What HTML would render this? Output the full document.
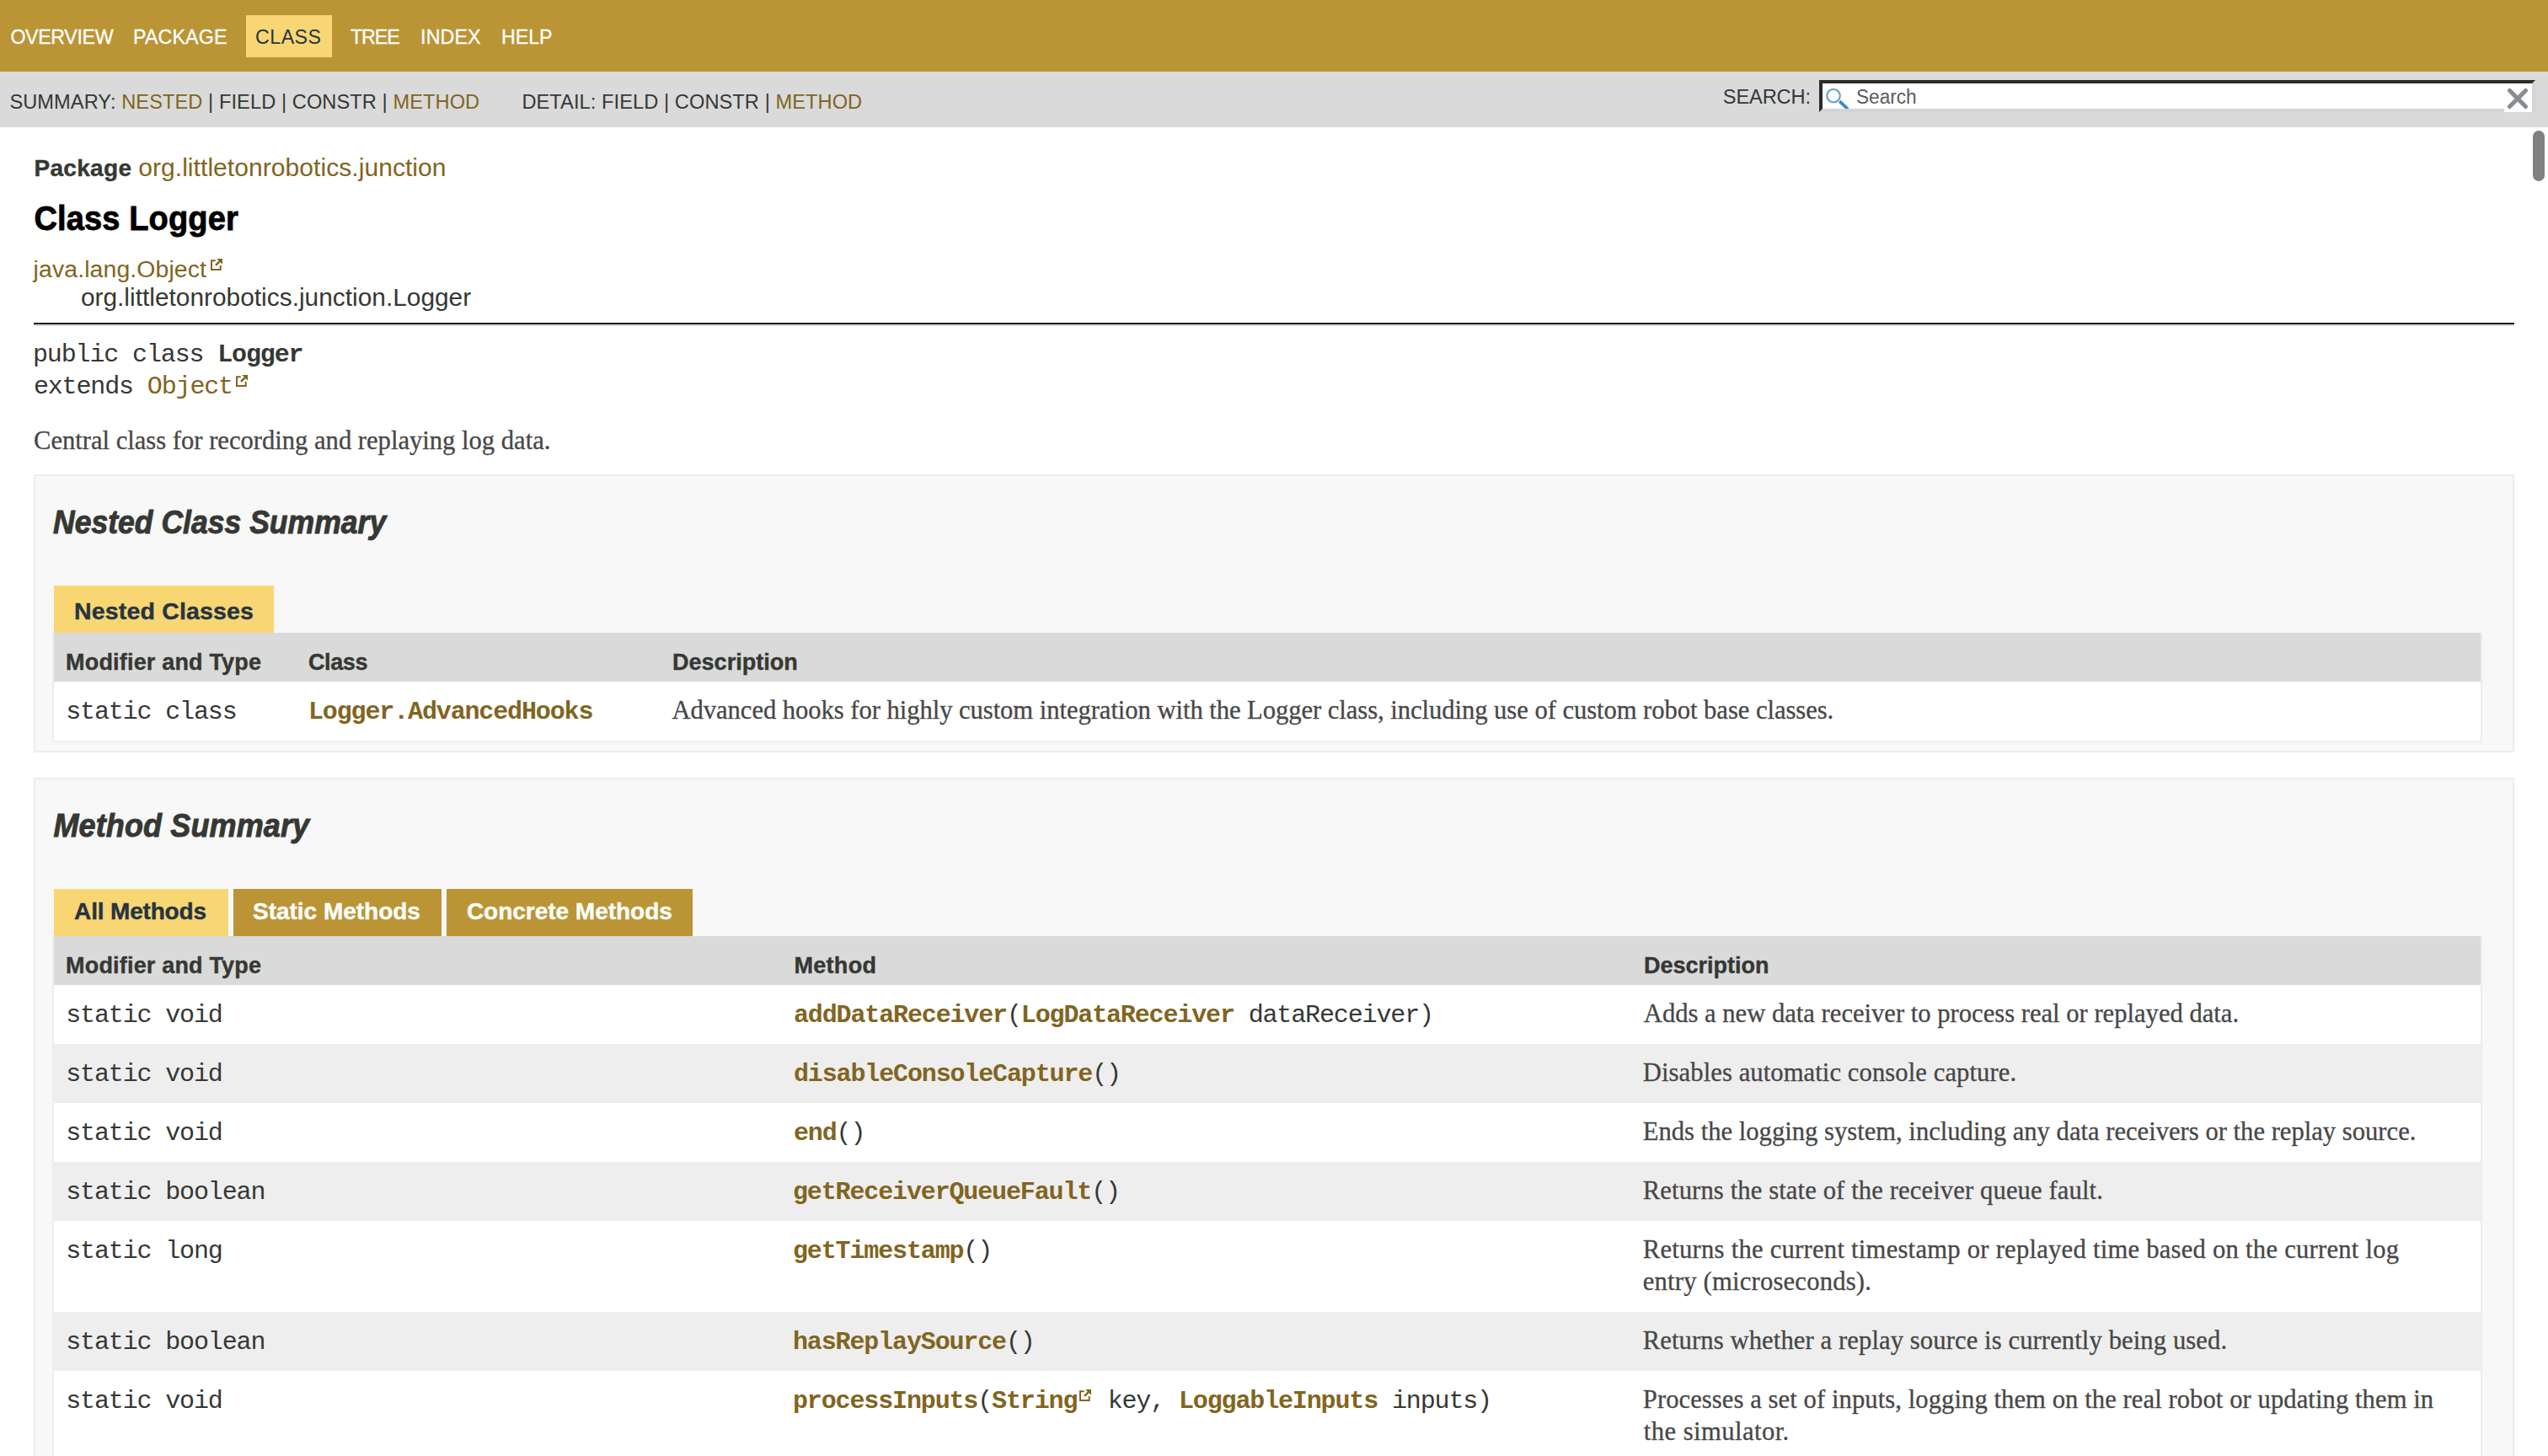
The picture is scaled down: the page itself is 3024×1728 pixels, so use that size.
<!DOCTYPE html><html><head><meta charset="utf-8"><style>
html,body{margin:0;padding:0;width:3024px;height:1728px;overflow:hidden;background:#fff}
.b{position:absolute}
@media (max-width:2000px){html{zoom:0.5}}
.t{position:absolute;white-space:nowrap;-webkit-text-stroke:0px currentColor}
.f-LiberationSerif{-webkit-text-stroke-width:0.3px}
.f-LiberationSans.w700{-webkit-text-stroke-width:0.4px}
.f-LiberationSans b{-webkit-text-stroke-width:0.4px}
</style></head><body><div class="b" style="left:0px;top:0px;width:3024px;height:85px;background:#bb9535"></div><div class="b" style="left:292px;top:18px;width:102px;height:50px;background:#f8d673"></div><div class="b" style="left:0px;top:85px;width:3024px;height:66px;background:#dadada"></div><div class="b" style="left:2159px;top:95px;width:850px;height:38px;background:#fff;border-style:solid;border-width:4px;border-color:#2b2b2b #d4d4d4 #d4d4d4 #2b2b2b;box-sizing:border-box"></div><div class="b" style="left:2163px;top:99px;width:842px;height:30px;overflow:hidden"><svg width="842" height="30" style="display:block"><circle cx="13" cy="14.6" r="7.8" fill="none" stroke="#72a6cb" stroke-width="2.3"/><path d="M20.2 21.2L30 30.5" stroke="#4588c2" stroke-width="3.8" fill="none"/></svg></div><div class="b" style="left:2972px;top:99px;width:33px;height:34px;background:#fff"><svg width="33" height="34" style="display:block"><path d="M6.5 8.5L25.5 27.5M25.5 8.5L6.5 27.5" stroke="#898d91" stroke-width="5.2" stroke-linecap="round"/></svg></div><div class="b" style="left:3006px;top:155px;width:14px;height:60px;background:#808080;border-radius:7px"></div><div class="b" style="left:250px;top:307px;width:14px;height:14px;"><svg width="14" height="14" viewBox="0 0 14 14" style="display:block"><path d="M0 1.2H5.7V3.2H2V12H10.7V8.1H12.7V14H0Z" fill="#816521"/><path d="M7.2 0H14V6.8Z" fill="#816521"/><path d="M5.1 7.0L10.6 1.5L12.4 3.3L6.9 8.8Z" fill="#816521"/></svg></div><div class="b" style="left:40px;top:383px;width:2944px;height:4px;border-top:2px solid #1c1c1c;border-bottom:2px solid #d9d9d9;box-sizing:border-box"></div><div class="b" style="left:280px;top:445px;width:14px;height:14px;"><svg width="14" height="14" viewBox="0 0 14 14" style="display:block"><path d="M0 1.2H5.7V3.2H2V12H10.7V8.1H12.7V14H0Z" fill="#816521"/><path d="M7.2 0H14V6.8Z" fill="#816521"/><path d="M5.1 7.0L10.6 1.5L12.4 3.3L6.9 8.8Z" fill="#816521"/></svg></div><div class="b" style="left:40px;top:563px;width:2944px;height:330px;background:#f8f8f8;border:2px solid #ededed;box-sizing:border-box"></div><div class="b" style="left:64px;top:695px;width:261px;height:56px;background:#f8d673"></div><div class="b" style="left:62px;top:751px;width:2884px;height:130px;background:#fff;border:2px solid #ededed;border-top:0;box-sizing:border-box"></div><div class="b" style="left:64px;top:751px;width:2880px;height:58px;background:#dadada"></div><div class="b" style="left:40px;top:923px;width:2944px;height:877px;background:#f8f8f8;border:2px solid #ededed;box-sizing:border-box"></div><div class="b" style="left:64px;top:1055px;width:207px;height:56px;background:#f8d673"></div><div class="b" style="left:277px;top:1055px;width:247px;height:56px;background:#bb9535"></div><div class="b" style="left:530px;top:1055px;width:292px;height:56px;background:#bb9535"></div><div class="b" style="left:62px;top:1111px;width:2884px;height:689px;background:#fff;border:2px solid #ededed;border-top:0;box-sizing:border-box"></div><div class="b" style="left:64px;top:1111px;width:2880px;height:58px;background:#dadada"></div><div class="b" style="left:64px;top:1239px;width:2880px;height:70px;background:#eeeeee"></div><div class="b" style="left:64px;top:1379px;width:2880px;height:70px;background:#eeeeee"></div><div class="b" style="left:64px;top:1557px;width:2880px;height:70px;background:#eeeeee"></div><div class="t f-LiberationSans w400" id="t0" style="left:12.40px;top:28.00px;font-family:'Liberation Sans';font-weight:400;font-style:normal;font-size:23.2px;line-height:32px;color:#ffffff;letter-spacing:-0.329px;transform:scaleY(1.045);transform-origin:0 24.00px;-webkit-text-stroke-width:0.3px;">OVERVIEW</div><div class="t f-LiberationSans w400" id="t1" style="left:158.00px;top:28.00px;font-family:'Liberation Sans';font-weight:400;font-style:normal;font-size:23.2px;line-height:32px;color:#ffffff;letter-spacing:0.167px;transform:scaleY(1.045);transform-origin:0 24.00px;-webkit-text-stroke-width:0.3px;">PACKAGE</div><div class="t f-LiberationSans w400" id="t2" style="left:415.90px;top:28.00px;font-family:'Liberation Sans';font-weight:400;font-style:normal;font-size:23.2px;line-height:32px;color:#ffffff;letter-spacing:-1.033px;transform:scaleY(1.045);transform-origin:0 24.00px;-webkit-text-stroke-width:0.3px;">TREE</div><div class="t f-LiberationSans w400" id="t3" style="left:499.10px;top:28.00px;font-family:'Liberation Sans';font-weight:400;font-style:normal;font-size:23.2px;line-height:32px;color:#ffffff;letter-spacing:0.125px;transform:scaleY(1.045);transform-origin:0 24.00px;-webkit-text-stroke-width:0.3px;">INDEX</div><div class="t f-LiberationSans w400" id="t4" style="left:595.00px;top:28.00px;font-family:'Liberation Sans';font-weight:400;font-style:normal;font-size:23.2px;line-height:32px;color:#ffffff;transform:scaleY(1.045);transform-origin:0 24.00px;-webkit-text-stroke-width:0.3px;">HELP</div><div class="t f-LiberationSans w400" id="t5" style="left:303.00px;top:28.00px;font-family:'Liberation Sans';font-weight:400;font-style:normal;font-size:23.2px;line-height:32px;color:#253441;letter-spacing:0.500px;transform:scaleY(1.045);transform-origin:0 24.00px;">CLASS</div><div class="t f-LiberationSans w400" id="t6" style="left:11.40px;top:105.00px;font-family:'Liberation Sans';font-weight:400;font-style:normal;font-size:23.6px;line-height:33px;color:#353833;letter-spacing:0.090px;transform:scaleY(1.045);transform-origin:0 24.00px;">SUMMARY:&nbsp;<span style="color:#816521">NESTED</span> | FIELD | CONSTR | <span style="color:#816521">METHOD</span></div><div class="t f-LiberationSans w400" id="t7" style="left:619.40px;top:105.00px;font-family:'Liberation Sans';font-weight:400;font-style:normal;font-size:23.6px;line-height:33px;color:#353833;letter-spacing:0.087px;transform:scaleY(1.045);transform-origin:0 24.00px;">DETAIL:&nbsp;FIELD | CONSTR | <span style="color:#816521">METHOD</span></div><div class="t f-LiberationSans w400" id="t8" style="left:2044.80px;top:99.00px;font-family:'Liberation Sans';font-weight:400;font-style:normal;font-size:23.6px;line-height:33px;color:#353833;letter-spacing:-0.117px;transform:scaleY(1.045);transform-origin:0 24.00px;">SEARCH:</div><div class="t f-LiberationSans w400" id="t9" style="left:2203.00px;top:100.00px;font-family:'Liberation Sans';font-weight:400;font-style:normal;font-size:22.6px;line-height:32px;color:#5c5c5c;transform:scaleY(1.045);transform-origin:0 23.00px;">Search</div><div class="t f-LiberationSans w700" id="t10" style="left:40.40px;top:180.00px;font-family:'Liberation Sans';font-weight:700;font-style:normal;font-size:28px;line-height:39px;color:#353833;letter-spacing:0.333px;">Package</div><div class="t f-LiberationSans w400" id="t11" style="left:164.20px;top:178.00px;font-family:'Liberation Sans';font-weight:400;font-style:normal;font-size:30px;line-height:42px;color:#816521;letter-spacing:0.062px;">org.littletonrobotics.junction</div><div class="t f-LiberationSans w700" id="t12" style="left:40.40px;top:234.00px;font-family:'Liberation Sans';font-weight:700;font-style:normal;font-size:38px;line-height:53px;color:#000000;letter-spacing:0.145px;transform:scaleY(1.065);transform-origin:0 39.00px;-webkit-text-stroke-width:0.8px;">Class Logger</div><div class="t f-LiberationSans w400" id="t13" style="left:39.60px;top:299.00px;font-family:'Liberation Sans';font-weight:400;font-style:normal;font-size:28.4px;line-height:40px;color:#816521;letter-spacing:0.120px;">java.lang.Object</div><div class="t f-LiberationSans w400" id="t14" style="left:95.90px;top:332.00px;font-family:'Liberation Sans';font-weight:400;font-style:normal;font-size:29.8px;line-height:42px;color:#353833;letter-spacing:0.031px;">org.littletonrobotics.junction.Logger</div><div class="t f-LiberationMono w400" id="t15" style="left:39.00px;top:400.00px;font-family:'Liberation Mono';font-weight:400;font-style:normal;font-size:30px;line-height:42px;color:#353833;letter-spacing:-1.140px;">public class <b>Logger</b></div><div class="t f-LiberationMono w400" id="t16" style="left:39.90px;top:438.00px;font-family:'Liberation Mono';font-weight:400;font-style:normal;font-size:30px;line-height:42px;color:#353833;letter-spacing:-1.140px;">extends <span style="color:#816521">Object</span></div><div class="t f-LiberationSerif w400" id="t17" style="left:40.00px;top:502.00px;font-family:'Liberation Serif';font-weight:400;font-style:normal;font-size:30.6px;line-height:43px;color:#474747;">Central class for recording and replaying log data.</div><div class="t f-LiberationSans w700" id="t18" style="left:63.00px;top:596.00px;font-family:'Liberation Sans';font-weight:700;font-style:italic;font-size:35.5px;line-height:50px;color:#353833;letter-spacing:0.026px;transform:scaleY(1.07);transform-origin:0 37.00px;-webkit-text-stroke-width:0.9px;">Nested Class Summary</div><div class="t f-LiberationSans w700" id="t19" style="left:88.10px;top:705.00px;font-family:'Liberation Sans';font-weight:700;font-style:normal;font-size:28.5px;line-height:40px;color:#253441;letter-spacing:0.162px;">Nested Classes</div><div class="t f-LiberationSans w700" id="t20" style="left:78.10px;top:767.00px;font-family:'Liberation Sans';font-weight:700;font-style:normal;font-size:27px;line-height:38px;color:#353833;letter-spacing:0.181px;">Modifier and Type</div><div class="t f-LiberationSans w700" id="t21" style="left:366.00px;top:767.00px;font-family:'Liberation Sans';font-weight:700;font-style:normal;font-size:27px;line-height:38px;color:#353833;letter-spacing:-0.400px;">Class</div><div class="t f-LiberationSans w700" id="t22" style="left:798.00px;top:767.00px;font-family:'Liberation Sans';font-weight:700;font-style:normal;font-size:27px;line-height:38px;color:#353833;letter-spacing:0.020px;">Description</div><div class="t f-LiberationMono w400" id="t23" style="left:78.20px;top:824.00px;font-family:'Liberation Mono';font-weight:400;font-style:normal;font-size:30px;line-height:42px;color:#353833;letter-spacing:-1.140px;">static class</div><div class="t f-LiberationMono w700" id="t24" style="left:366.00px;top:824.00px;font-family:'Liberation Mono';font-weight:700;font-style:normal;font-size:30px;line-height:42px;color:#816521;letter-spacing:-1.140px;">Logger.AdvancedHooks</div><div class="t f-LiberationSerif w400" id="t25" style="left:797.50px;top:822.00px;font-family:'Liberation Serif';font-weight:400;font-style:normal;font-size:30.6px;line-height:43px;color:#474747;letter-spacing:-0.041px;">Advanced hooks for highly custom integration with the Logger class, including use of custom robot base classes.</div><div class="t f-LiberationSans w700" id="t26" style="left:63.50px;top:956.00px;font-family:'Liberation Sans';font-weight:700;font-style:italic;font-size:36px;line-height:50px;color:#353833;letter-spacing:0.115px;transform:scaleY(1.07);transform-origin:0 37.00px;-webkit-text-stroke-width:0.9px;">Method Summary</div><div class="t f-LiberationSans w700" id="t27" style="left:88.10px;top:1062.00px;font-family:'Liberation Sans';font-weight:700;font-style:normal;font-size:28px;line-height:39px;color:#253441;letter-spacing:-0.170px;">All Methods</div><div class="t f-LiberationSans w700" id="t28" style="left:300.00px;top:1062.00px;font-family:'Liberation Sans';font-weight:700;font-style:normal;font-size:28px;line-height:39px;color:#ffffff;letter-spacing:-0.015px;">Static Methods</div><div class="t f-LiberationSans w700" id="t29" style="left:553.90px;top:1062.00px;font-family:'Liberation Sans';font-weight:700;font-style:normal;font-size:28px;line-height:39px;color:#ffffff;letter-spacing:-0.020px;">Concrete Methods</div><div class="t f-LiberationSans w700" id="t30" style="left:78.10px;top:1127.00px;font-family:'Liberation Sans';font-weight:700;font-style:normal;font-size:27px;line-height:38px;color:#353833;letter-spacing:0.181px;">Modifier and Type</div><div class="t f-LiberationSans w700" id="t31" style="left:942.40px;top:1127.00px;font-family:'Liberation Sans';font-weight:700;font-style:normal;font-size:27px;line-height:38px;color:#353833;letter-spacing:0.320px;">Method</div><div class="t f-LiberationSans w700" id="t32" style="left:1951.00px;top:1127.00px;font-family:'Liberation Sans';font-weight:700;font-style:normal;font-size:27px;line-height:38px;color:#353833;letter-spacing:-0.010px;">Description</div><div class="t f-LiberationMono w400" id="t33" style="left:78.20px;top:1184.00px;font-family:'Liberation Mono';font-weight:400;font-style:normal;font-size:30px;line-height:42px;color:#353833;letter-spacing:-1.140px;">static void</div><div class="t f-LiberationMono w400" id="t34" style="left:942.00px;top:1184.00px;font-family:'Liberation Mono';font-weight:400;font-style:normal;font-size:30px;line-height:42px;color:#353833;letter-spacing:-1.140px;"><b style="color:#816521">addDataReceiver</b>(<b style="color:#816521">LogDataReceiver</b> dataReceiver)</div><div class="t f-LiberationSerif w400" id="t35" style="left:1950.80px;top:1182.00px;font-family:'Liberation Serif';font-weight:400;font-style:normal;font-size:30.6px;line-height:43px;color:#474747;letter-spacing:0.007px;">Adds a new data receiver to process real or replayed data.</div><div class="t f-LiberationMono w400" id="t36" style="left:78.20px;top:1254.00px;font-family:'Liberation Mono';font-weight:400;font-style:normal;font-size:30px;line-height:42px;color:#353833;letter-spacing:-1.140px;">static void</div><div class="t f-LiberationMono w400" id="t37" style="left:942.00px;top:1254.00px;font-family:'Liberation Mono';font-weight:400;font-style:normal;font-size:30px;line-height:42px;color:#353833;letter-spacing:-1.140px;"><b style="color:#816521">disableConsoleCapture</b>()</div><div class="t f-LiberationSerif w400" id="t38" style="left:1949.80px;top:1252.00px;font-family:'Liberation Serif';font-weight:400;font-style:normal;font-size:30.6px;line-height:43px;color:#474747;letter-spacing:0.094px;">Disables automatic console capture.</div><div class="t f-LiberationMono w400" id="t39" style="left:78.20px;top:1324.00px;font-family:'Liberation Mono';font-weight:400;font-style:normal;font-size:30px;line-height:42px;color:#353833;letter-spacing:-1.140px;">static void</div><div class="t f-LiberationMono w400" id="t40" style="left:942.00px;top:1324.00px;font-family:'Liberation Mono';font-weight:400;font-style:normal;font-size:30px;line-height:42px;color:#353833;letter-spacing:-1.140px;"><b style="color:#816521">end</b>()</div><div class="t f-LiberationSerif w400" id="t41" style="left:1949.80px;top:1322.00px;font-family:'Liberation Serif';font-weight:400;font-style:normal;font-size:30.6px;line-height:43px;color:#474747;letter-spacing:0.012px;">Ends the logging system, including any data receivers or the replay source.</div><div class="t f-LiberationMono w400" id="t42" style="left:78.20px;top:1394.00px;font-family:'Liberation Mono';font-weight:400;font-style:normal;font-size:30px;line-height:42px;color:#353833;letter-spacing:-1.140px;">static boolean</div><div class="t f-LiberationMono w400" id="t43" style="left:941.00px;top:1394.00px;font-family:'Liberation Mono';font-weight:400;font-style:normal;font-size:30px;line-height:42px;color:#353833;letter-spacing:-1.140px;"><b style="color:#816521">getReceiverQueueFault</b>()</div><div class="t f-LiberationSerif w400" id="t44" style="left:1949.80px;top:1392.00px;font-family:'Liberation Serif';font-weight:400;font-style:normal;font-size:30.6px;line-height:43px;color:#474747;letter-spacing:0.129px;">Returns the state of the receiver queue fault.</div><div class="t f-LiberationMono w400" id="t45" style="left:78.20px;top:1464.00px;font-family:'Liberation Mono';font-weight:400;font-style:normal;font-size:30px;line-height:42px;color:#353833;letter-spacing:-1.140px;">static long</div><div class="t f-LiberationMono w400" id="t46" style="left:941.00px;top:1464.00px;font-family:'Liberation Mono';font-weight:400;font-style:normal;font-size:30px;line-height:42px;color:#353833;letter-spacing:-1.140px;"><b style="color:#816521">getTimestamp</b>()</div><div class="t f-LiberationSerif w400" id="t47" style="left:1949.80px;top:1462.00px;font-family:'Liberation Serif';font-weight:400;font-style:normal;font-size:30.6px;line-height:43px;color:#474747;letter-spacing:0.257px;">Returns the current timestamp or replayed time based on the current log</div><div class="t f-LiberationSerif w400" id="t48" style="left:1949.80px;top:1500.00px;font-family:'Liberation Serif';font-weight:400;font-style:normal;font-size:30.6px;line-height:43px;color:#474747;letter-spacing:0.215px;">entry (microseconds).</div><div class="t f-LiberationMono w400" id="t49" style="left:78.20px;top:1572.00px;font-family:'Liberation Mono';font-weight:400;font-style:normal;font-size:30px;line-height:42px;color:#353833;letter-spacing:-1.140px;">static boolean</div><div class="t f-LiberationMono w400" id="t50" style="left:941.00px;top:1572.00px;font-family:'Liberation Mono';font-weight:400;font-style:normal;font-size:30px;line-height:42px;color:#353833;letter-spacing:-1.140px;"><b style="color:#816521">hasReplaySource</b>()</div><div class="t f-LiberationSerif w400" id="t51" style="left:1949.80px;top:1570.00px;font-family:'Liberation Serif';font-weight:400;font-style:normal;font-size:30.6px;line-height:43px;color:#474747;letter-spacing:0.109px;">Returns whether a replay source is currently being used.</div><div class="t f-LiberationMono w400" id="t52" style="left:78.20px;top:1642.00px;font-family:'Liberation Mono';font-weight:400;font-style:normal;font-size:30px;line-height:42px;color:#353833;letter-spacing:-1.140px;">static void</div><div class="t f-LiberationMono w400" id="t53" style="left:941.00px;top:1642.00px;font-family:'Liberation Mono';font-weight:400;font-style:normal;font-size:30px;line-height:42px;color:#353833;letter-spacing:-1.140px;"><b style="color:#816521">processInputs</b>(<b style="color:#816521">String</b><span style="display:inline-block;width:14px;height:14px;margin:0 2.5px 0 3px;vertical-align:8px"><svg width="14" height="14" viewBox="0 0 14 14" style="display:block"><path d="M0 1.2H5.7V3.2H2V12H10.7V8.1H12.7V14H0Z" fill="#816521"/><path d="M7.2 0H14V6.8Z" fill="#816521"/><path d="M5.1 7.0L10.6 1.5L12.4 3.3L6.9 8.8Z" fill="#816521"/></svg></span> key, <b style="color:#816521">LoggableInputs</b> inputs)</div><div class="t f-LiberationSerif w400" id="t54" style="left:1949.80px;top:1640.00px;font-family:'Liberation Serif';font-weight:400;font-style:normal;font-size:30.6px;line-height:43px;color:#474747;letter-spacing:0.082px;">Processes a set of inputs, logging them on the real robot or updating them in</div><div class="t f-LiberationSerif w400" id="t55" style="left:1950.80px;top:1678.00px;font-family:'Liberation Serif';font-weight:400;font-style:normal;font-size:30.6px;line-height:43px;color:#474747;letter-spacing:0.454px;">the simulator.</div></body></html>
